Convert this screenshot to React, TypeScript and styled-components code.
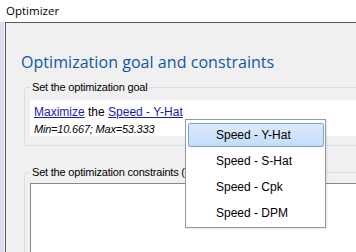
import React from "react";
import styled, { createGlobalStyle } from "styled-components";

const Global = createGlobalStyle`
  html, body { margin: 0; padding: 0; background: #ffffff; }
  body {
    width: 356px;
    height: 252px;
    overflow: hidden;
    font-family: "Liberation Sans", Arial, sans-serif;
    color: #000;
  }
`;

const Root = styled.div`
  position: relative;
  width: 356px;
  height: 252px;
  overflow: hidden;
  display: flex;
  flex-direction: column;
`;

const TitleBar = styled.div`
  flex-shrink: 0;
  height: 22px;
  line-height: 22px;
  padding-left: 6px;
  font-family: "Open Sans", "Liberation Sans", sans-serif;
  font-size: 11.5px;
  color: #000;
  background: #fff;
`;

const Body = styled.div`
  flex: 1;
  display: flex;
  min-height: 0;
`;

const FrameStrip = styled.div`
  width: 5px;
  flex-shrink: 0;
  background: linear-gradient(to right, #d9dcef 0, #dadcf0 4px, #f3f4fa 4px);
`;

const Panel = styled.div`
  flex: 1;
  min-width: 0;
  background: #f0f0f0;
  border-top: 1px solid #5a5a5a;
  border-left: 1px solid #5a5a5a;
  overflow: hidden;
`;

const Heading = styled.h1`
  margin: 29px 0 0 15px;
  font-family: "Open Sans", "Noto Sans", sans-serif;
  font-weight: 500;
  font-size: 16px;
  letter-spacing: 0.05px;
  line-height: 20px;
  color: #0f57a8;
  white-space: nowrap;
`;

const GroupBox = styled.fieldset<{ $gap: number; $padTop: number; $padBottom: number }>`
  margin: ${(p) => p.$gap}px -40px 0 18px;
  padding: ${(p) => p.$padTop}px 5px ${(p) => p.$padBottom}px 5px;
  border: 1px solid #d5dfe5;
  border-radius: 3px;
  min-width: 0;
`;

const Legend = styled.legend`
  padding: 0 2px;
  font-size: 11px;
  line-height: 13px;
  letter-spacing: -0.2px;
  color: #000;
  white-space: nowrap;
`;

const GoalPanel = styled.div`
  height: 36px;
  box-sizing: border-box;
  padding: 4px 4px 0;
  background: #ffffff;
`;

const LinkLine = styled.div`
  font-size: 12px;
  line-height: 16px;
  white-space: nowrap;
`;

const Link = styled.a`
  color: #1a1ab4;
  text-decoration: underline;
  cursor: pointer;
`;

const RangeLine = styled.div`
  margin-top: 3px;
  font-size: 11px;
  font-style: italic;
  line-height: 13px;
  letter-spacing: -0.2px;
  white-space: nowrap;
`;

const ListBox = styled.div`
  height: 120px;
  background: #ffffff;
  border: 1px solid #828790;
`;

const Popup = styled.div`
  position: absolute;
  left: 185px;
  top: 119px;
  width: 141px;
  box-sizing: border-box;
  padding: 2px 1px 1px 2px;
  background: #ffffff;
  border: 1px solid #979797;
  box-shadow: 1px 1px 2px rgba(0, 0, 0, 0.1);
`;

const Item = styled.div`
  padding: 1px 0;
`;

const ItemBox = styled.div<{ $active?: boolean }>`
  height: 24px;
  box-sizing: border-box;
  line-height: 22px;
  padding-left: 27px;
  font-size: 12px;
  color: #000;
  border: 1px solid ${(p) => (p.$active ? "#7da2ce" : "transparent")};
  border-radius: 2px;
  background: ${(p) =>
    p.$active ? "linear-gradient(to bottom, #dcebfc, #c4dcf9)" : "transparent"};
  white-space: nowrap;
`;

const options = ["Speed - Y-Hat", "Speed - S-Hat", "Speed - Cpk", "Speed - DPM"];

export default function App() {
  return (
    <Root>
      <Global />
      <TitleBar>Optimizer</TitleBar>
      <Body>
        <FrameStrip />
        <Panel>
          <Heading>Optimization goal and constraints</Heading>
          <GroupBox $gap={9} $padTop={6} $padBottom={9}>
            <Legend>Set the optimization goal</Legend>
            <GoalPanel>
              <LinkLine>
                <Link>Maximize</Link> the <Link>Speed - Y-Hat</Link>
              </LinkLine>
              <RangeLine>Min=10.667; Max=53.333</RangeLine>
            </GoalPanel>
          </GroupBox>
          <GroupBox $gap={20} $padTop={4} $padBottom={0}>
            <Legend>Set the optimization constraints (optional)</Legend>
            <ListBox />
          </GroupBox>
        </Panel>
      </Body>
      <Popup>
        {options.map((o, i) => (
          <Item key={o}>
            <ItemBox $active={i === 0}>{o}</ItemBox>
          </Item>
        ))}
      </Popup>
    </Root>
  );
}
